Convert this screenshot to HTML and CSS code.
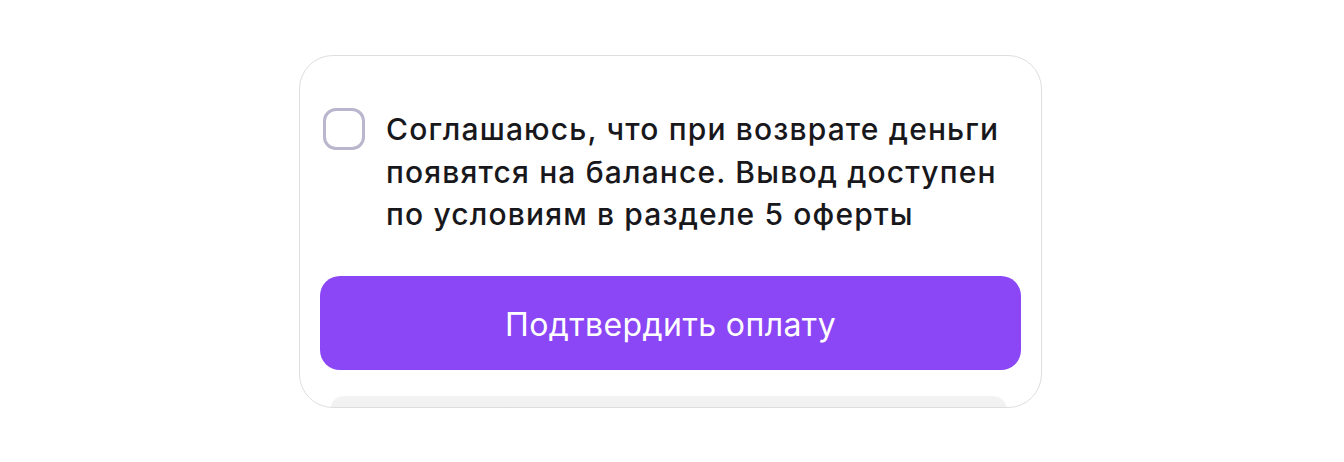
FILE: index.html
```html
<!DOCTYPE html>
<html lang="ru">
<head>
<meta charset="utf-8">
<link rel="stylesheet" href="styles.css">
</head>
<body>
<div class="card">
  <label class="agree">
    <span class="checkbox"></span>
    <span class="agree-text">Соглашаюсь, что при возврате деньги появятся на балансе. Вывод доступен по условиям в разделе 5 оферты</span>
  </label>
  <button class="pay-btn">Подтвердить оплату</button>
  <div class="next-panel"></div>
</div>
</body>
</html>
```
FILE: styles.css
```css
html, body {
  margin: 0;
  padding: 0;
  background: #ffffff;
}
body {
  font-family: "Inter", "Roboto", "Noto Sans", sans-serif;
  padding: 55px 0 0 299px;
}
.card {
  box-sizing: border-box;
  width: 743px;
  height: 353px;
  border: 1px solid #dedee0;
  border-radius: 34px;
  background: #ffffff;
  overflow: hidden;
  padding: 51px 0 0 20px;
  display: flex;
  flex-direction: column;
}
.agree {
  display: flex;
  align-items: flex-start;
  gap: 21px;
  padding-left: 3px;
  flex: none;
}
.checkbox {
  flex: none;
  box-sizing: border-box;
  width: 42px;
  height: 42px;
  border: 3px solid #b9b6cd;
  border-radius: 13px;
  margin-top: 1px;
}
.agree-text {
  width: 628px;
  font-size: 30px;
  font-weight: 500;
  letter-spacing: 1.15px;
  line-height: 42.5px;
  color: #18181c;
  margin-top: 1px;
}
.pay-btn {
  flex: none;
  margin-top: 40px;
  width: 701px;
  height: 94px;
  border: none;
  border-radius: 20px;
  background: #8b46f5;
  color: #ffffff;
  font-family: inherit;
  font-size: 32px;
  font-weight: 400;
  letter-spacing: 0.4px;
  padding: 4px 0 0;
}
.next-panel {
  flex: none;
  margin: 26px 0 0 10px;
  width: 677px;
  height: 40px;
  border-radius: 14px;
  background: linear-gradient(#f3f3f3, #ececec);
}
```
